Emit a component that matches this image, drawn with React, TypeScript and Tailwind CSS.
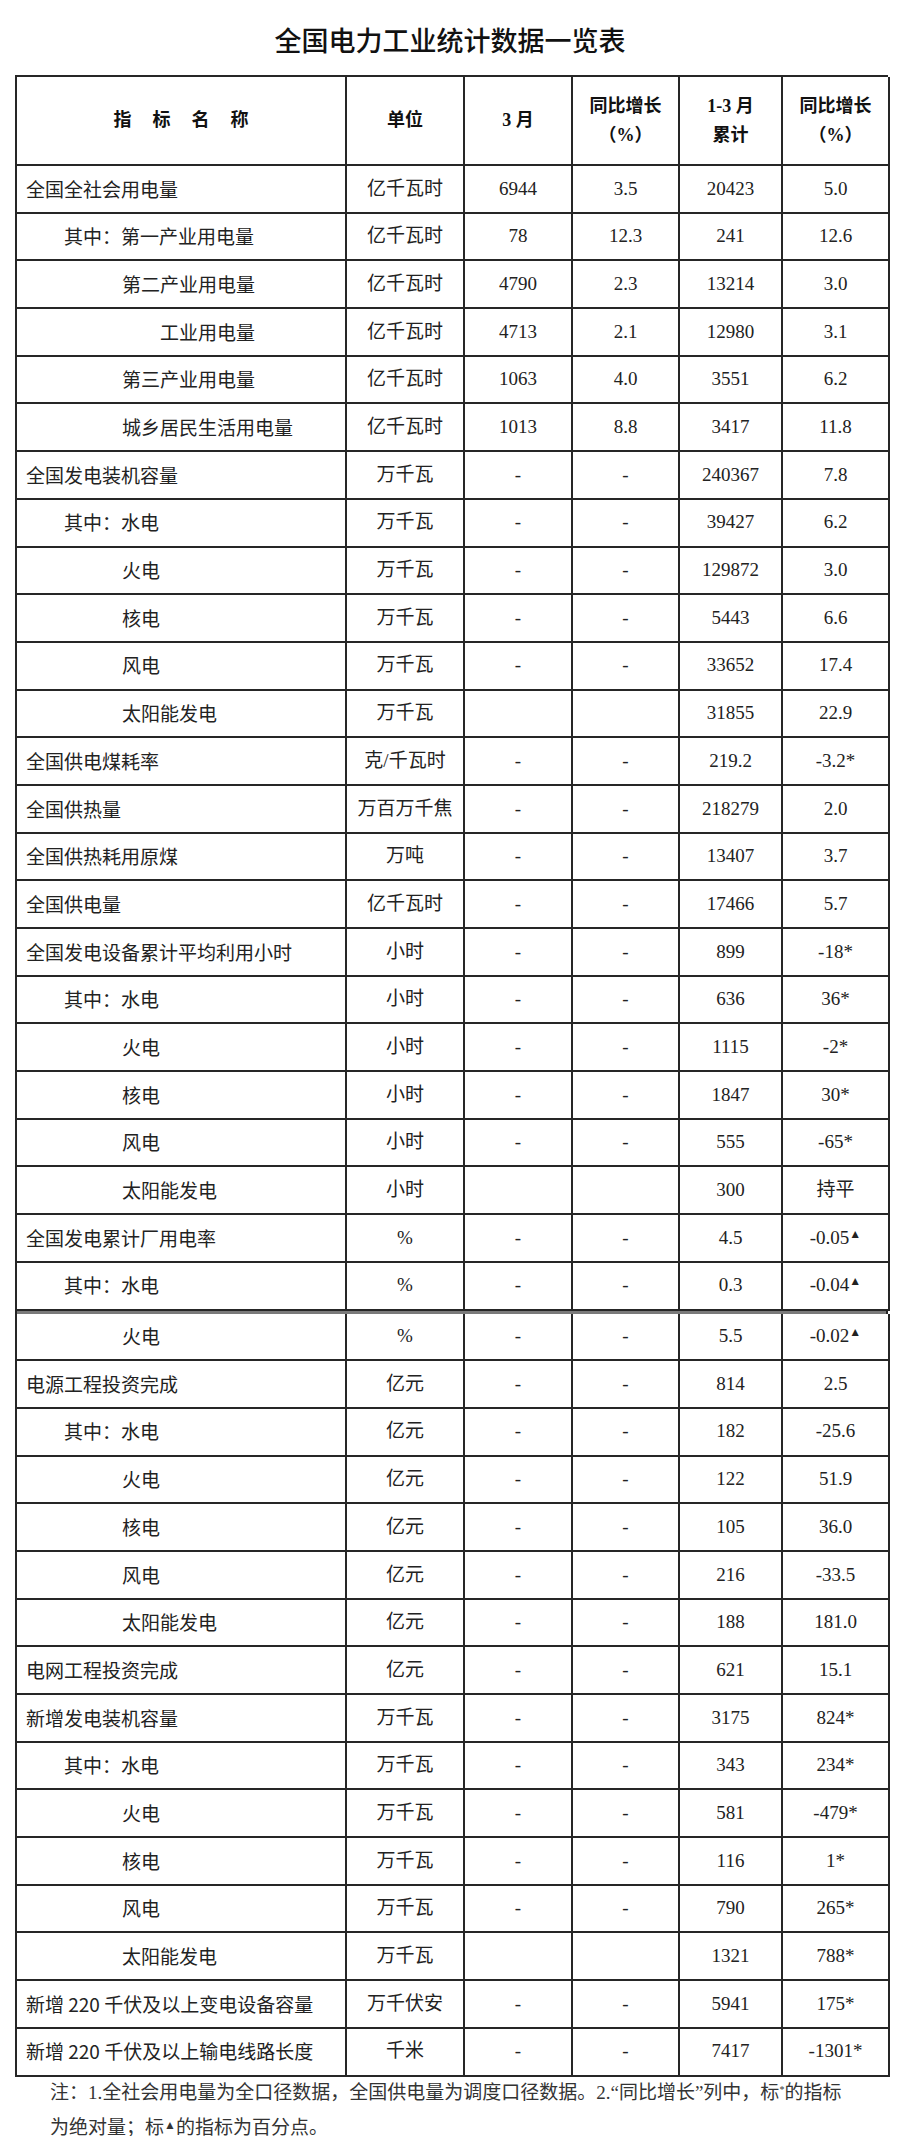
import React from "react";

type Row = {
  label: string;
  indent: 0 | 1 | 2 | 3;
  unit: string;
  m: string;
  my: string;
  cum: string;
  cy: React.ReactNode;
};

const tri = (v: string) => (
  <span>
    {v}
    <span className="relative -top-[6px] text-[12px]">▲</span>
  </span>
);

const rows: Row[] = [
  { label: "全国全社会用电量", indent: 0, unit: "亿千瓦时", m: "6944", my: "3.5", cum: "20423", cy: "5.0" },
  { label: "其中：第一产业用电量", indent: 1, unit: "亿千瓦时", m: "78", my: "12.3", cum: "241", cy: "12.6" },
  { label: "第二产业用电量", indent: 2, unit: "亿千瓦时", m: "4790", my: "2.3", cum: "13214", cy: "3.0" },
  { label: "工业用电量", indent: 3, unit: "亿千瓦时", m: "4713", my: "2.1", cum: "12980", cy: "3.1" },
  { label: "第三产业用电量", indent: 2, unit: "亿千瓦时", m: "1063", my: "4.0", cum: "3551", cy: "6.2" },
  { label: "城乡居民生活用电量", indent: 2, unit: "亿千瓦时", m: "1013", my: "8.8", cum: "3417", cy: "11.8" },
  { label: "全国发电装机容量", indent: 0, unit: "万千瓦", m: "-", my: "-", cum: "240367", cy: "7.8" },
  { label: "其中：水电", indent: 1, unit: "万千瓦", m: "-", my: "-", cum: "39427", cy: "6.2" },
  { label: "火电", indent: 2, unit: "万千瓦", m: "-", my: "-", cum: "129872", cy: "3.0" },
  { label: "核电", indent: 2, unit: "万千瓦", m: "-", my: "-", cum: "5443", cy: "6.6" },
  { label: "风电", indent: 2, unit: "万千瓦", m: "-", my: "-", cum: "33652", cy: "17.4" },
  { label: "太阳能发电", indent: 2, unit: "万千瓦", m: "", my: "", cum: "31855", cy: "22.9" },
  { label: "全国供电煤耗率", indent: 0, unit: "克/千瓦时", m: "-", my: "-", cum: "219.2", cy: "-3.2*" },
  { label: "全国供热量", indent: 0, unit: "万百万千焦", m: "-", my: "-", cum: "218279", cy: "2.0" },
  { label: "全国供热耗用原煤", indent: 0, unit: "万吨", m: "-", my: "-", cum: "13407", cy: "3.7" },
  { label: "全国供电量", indent: 0, unit: "亿千瓦时", m: "-", my: "-", cum: "17466", cy: "5.7" },
  { label: "全国发电设备累计平均利用小时", indent: 0, unit: "小时", m: "-", my: "-", cum: "899", cy: "-18*" },
  { label: "其中：水电", indent: 1, unit: "小时", m: "-", my: "-", cum: "636", cy: "36*" },
  { label: "火电", indent: 2, unit: "小时", m: "-", my: "-", cum: "1115", cy: "-2*" },
  { label: "核电", indent: 2, unit: "小时", m: "-", my: "-", cum: "1847", cy: "30*" },
  { label: "风电", indent: 2, unit: "小时", m: "-", my: "-", cum: "555", cy: "-65*" },
  { label: "太阳能发电", indent: 2, unit: "小时", m: "", my: "", cum: "300", cy: "持平" },
  { label: "全国发电累计厂用电率", indent: 0, unit: "%", m: "-", my: "-", cum: "4.5", cy: tri("-0.05") },
  { label: "其中：水电", indent: 1, unit: "%", m: "-", my: "-", cum: "0.3", cy: tri("-0.04") },
  { label: "火电", indent: 2, unit: "%", m: "-", my: "-", cum: "5.5", cy: tri("-0.02") },
  { label: "电源工程投资完成", indent: 0, unit: "亿元", m: "-", my: "-", cum: "814", cy: "2.5" },
  { label: "其中：水电", indent: 1, unit: "亿元", m: "-", my: "-", cum: "182", cy: "-25.6" },
  { label: "火电", indent: 2, unit: "亿元", m: "-", my: "-", cum: "122", cy: "51.9" },
  { label: "核电", indent: 2, unit: "亿元", m: "-", my: "-", cum: "105", cy: "36.0" },
  { label: "风电", indent: 2, unit: "亿元", m: "-", my: "-", cum: "216", cy: "-33.5" },
  { label: "太阳能发电", indent: 2, unit: "亿元", m: "-", my: "-", cum: "188", cy: "181.0" },
  { label: "电网工程投资完成", indent: 0, unit: "亿元", m: "-", my: "-", cum: "621", cy: "15.1" },
  { label: "新增发电装机容量", indent: 0, unit: "万千瓦", m: "-", my: "-", cum: "3175", cy: "824*" },
  { label: "其中：水电", indent: 1, unit: "万千瓦", m: "-", my: "-", cum: "343", cy: "234*" },
  { label: "火电", indent: 2, unit: "万千瓦", m: "-", my: "-", cum: "581", cy: "-479*" },
  { label: "核电", indent: 2, unit: "万千瓦", m: "-", my: "-", cum: "116", cy: "1*" },
  { label: "风电", indent: 2, unit: "万千瓦", m: "-", my: "-", cum: "790", cy: "265*" },
  { label: "太阳能发电", indent: 2, unit: "万千瓦", m: "", my: "", cum: "1321", cy: "788*" },
  { label: "新增 220 千伏及以上变电设备容量", indent: 0, unit: "万千伏安", m: "-", my: "-", cum: "5941", cy: "175*" },
  { label: "新增 220 千伏及以上输电线路长度", indent: 0, unit: "千米", m: "-", my: "-", cum: "7417", cy: "-1301*" },
];

const indentCls = ["pl-[9px]", "pl-[47px]", "pl-[105px]", "pl-[143px]"];

const cell = "flex items-center justify-center border-r-2 border-b-2 border-[#262626]";
const cols = "grid grid-cols-[330px_118px_108px_107px_103px_107px]";
const num = "font-['Liberation_Serif','Noto_Sans_CJK_SC',serif] text-[19px] text-[#222]";

function DataRow({ r }: { r: Row }) {
  return (
    <div className={`${cols} h-[47.7px]`}>
      <div
        className={`flex items-center border-r-2 border-b-2 border-[#262626] ${indentCls[r.indent]} font-['Noto_Sans_CJK_SC',sans-serif] text-[19px] text-[#222]`}
      >
        {r.label}
      </div>
      <div className={`${cell} ${num}`}>{r.unit}</div>
      <div className={`${cell} ${num}`}>{r.m}</div>
      <div className={`${cell} ${num}`}>{r.my}</div>
      <div className={`${cell} ${num}`}>{r.cum}</div>
      <div className={`${cell} ${num}`}>{r.cy}</div>
    </div>
  );
}

export default function App() {
  const head = "font-['Liberation_Serif','Noto_Sans_CJK_SC',serif] font-bold text-[18px] text-[#111] leading-[29px] text-center";
  return (
    <div className="w-[900px] min-h-[2136px] bg-white">
      <div className="h-[75px] pt-[5px] flex items-center justify-center font-['Noto_Sans_CJK_SC',sans-serif] font-medium text-[27px] text-[#111]">
        全国电力工业统计数据一览表
      </div>
      <div className="ml-[15px] w-[873px]">
        <div className="border-l-2 border-t-2 border-[#262626]">
          <div className={`${cols} h-[89px]`}>
            <div className={`${cell} ${head}`}>
              <span className="tracking-[21px] pl-[21px]">指标名称</span>
            </div>
            <div className={`${cell} ${head}`}>单位</div>
            <div className={`${cell} ${head}`}>3 月</div>
            <div className={`${cell} ${head} flex-col`}>
              <span>同比增长</span>
              <span>（%）</span>
            </div>
            <div className={`${cell} ${head} flex-col`}>
              <span>1-3 月</span>
              <span>累计</span>
            </div>
            <div className={`${cell} ${head} flex-col`}>
              <span>同比增长</span>
              <span>（%）</span>
            </div>
          </div>
          {rows.slice(0, 24).map((r, i) => (
            <DataRow key={i} r={r} />
          ))}
          <div className="h-[3px] bg-[#7a7a7a] border-r-2 border-[#262626]" />
          {rows.slice(24).map((r, i) => (
            <DataRow key={i + 24} r={r} />
          ))}
        </div>
        <div className="pl-[35px] leading-[32px] text-[19px] text-[#333] font-['Liberation_Serif','Noto_Sans_CJK_SC',serif]">
          <div>
            注：1.全社会用电量为全口径数据，全国供电量为调度口径数据。2.“同比增长”列中，标
            <span className="relative -top-[6px] text-[10px]">*</span>
            的指标
          </div>
          <div>
            为绝对量；标<span className="relative -top-[5px] text-[12px]">▲</span>的指标为百分点。
          </div>
        </div>
      </div>
    </div>
  );
}
